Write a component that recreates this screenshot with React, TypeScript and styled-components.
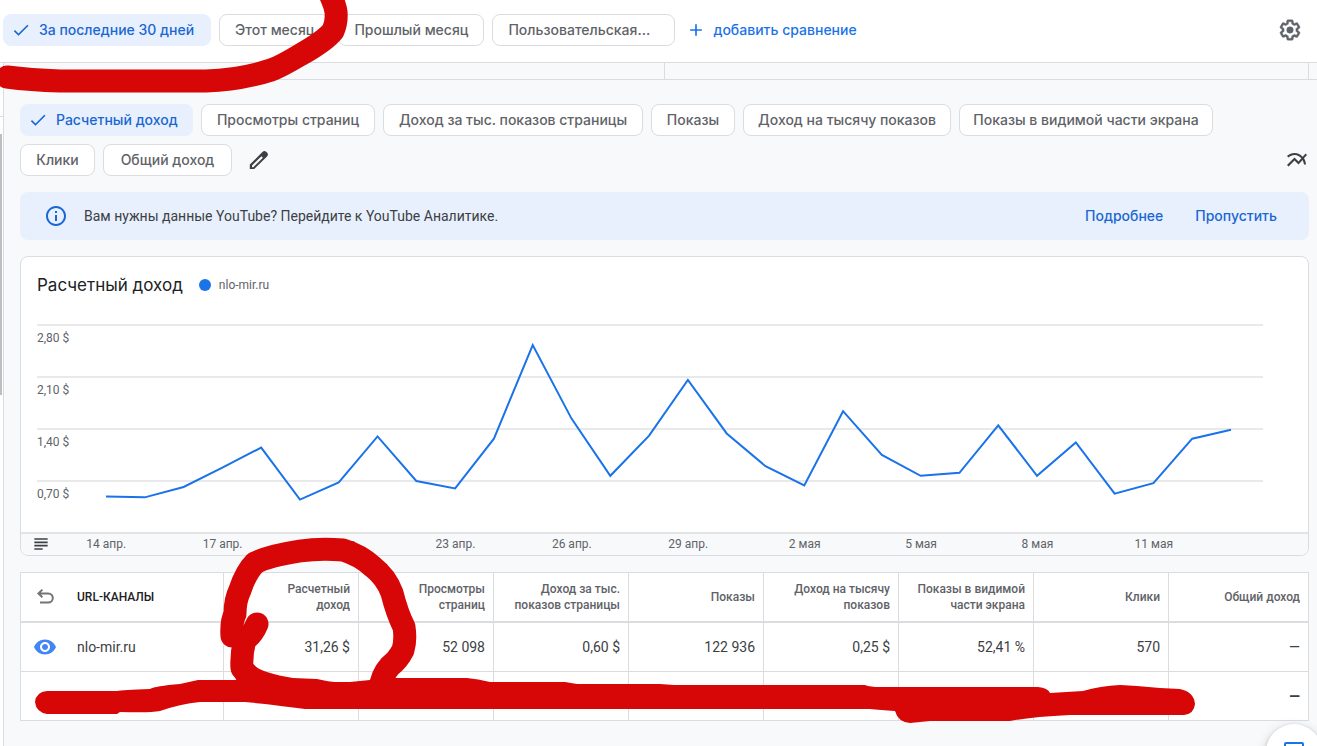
import React from "react";
import styled, { createGlobalStyle, css } from "styled-components";
import { MdAdd, MdCheck, MdMultilineChart, MdOutlineInfo, MdSubject, MdVisibility } from "react-icons/md";

const display = `Inter, "Noto Sans", sans-serif`;
const line = "#dadce0";

const GlobalStyle = createGlobalStyle`
  * { box-sizing: border-box; }
  body { margin: 0; background: #f8f9fa; font-family: Roboto, "Noto Sans", sans-serif; color: #3c4043; overflow: hidden; }
  button { font: inherit; color: inherit; border: 0; padding: 0; background: none; cursor: pointer; }
  svg { display: block; }
`;

const Page = styled.div`
  position: relative;
  min-height: 100vh;
`;

const TopBar = styled.header`
  display: flex;
  align-items: center;
  gap: 8px;
  height: 63px;
  padding: 0 15px 2px 3px;
  background: #fff;
  border-bottom: 1px solid ${line};
`;

const Spacer = styled.div`
  flex: 1;
`;

const Chip = styled.button<{ $selected?: boolean; $width?: number; $start?: boolean }>`
  display: flex;
  align-items: center;
  justify-content: ${(p) => (p.$start ? "flex-start" : "center")};
  height: 32px;
  padding: 0 ${(p) => (p.$width && !p.$start ? 0 : 15)}px;
  width: ${(p) => (p.$width ? `${p.$width}px` : "auto")};
  border: 1px solid ${line};
  border-radius: 8px;
  background: #fff;
  color: #5f6368;
  font: 500 14px/20px ${display};
  white-space: nowrap;
  ${(p) =>
    p.$selected &&
    css`
      justify-content: flex-start;
      gap: 8px;
      padding-left: 7px;
      border-color: #e8f0fe;
      background: #e8f0fe;
      color: #1967d2;
    `}
`;

const AddButton = styled.button`
  display: flex;
  align-items: center;
  gap: 7px;
  margin-left: 3px;
  color: #1a73e8;
  font: 500 14px/20px ${display};
`;

const IconButton = styled.button`
  display: grid;
  place-items: center;
  width: 24px;
  height: 24px;
  color: ${(p) => p.color || "#3c4043"};
`;

const Body = styled.div`
  display: flex;
`;

const Rail = styled.div`
  display: flex;
  flex-direction: column;
  flex: none;
  width: 4px;
  min-height: 683px;
  border-right: 1px solid ${line};
  background: #fff;
`;

const RailTop = styled.div`
  height: 54px;
  border-bottom: 1px solid ${line};
`;

const RailThumb = styled.div`
  width: 2px;
  height: 261px;
  margin-top: 17px;
  background: #bdbdc2;
`;

const Content = styled.div`
  flex: 1;
  min-width: 0;
`;

const SplitStrip = styled.div`
  display: flex;
  height: 17px;
  padding-right: 8px;
  border-bottom: 1px solid ${line};
`;

const SplitCell = styled.div<{ $grow: number }>`
  flex: ${(p) => p.$grow} 1 0;
  border-right: 1px solid ${line};
`;

const Main = styled.main`
  display: flex;
  flex-direction: column;
  gap: 16px;
  padding: 24px 8px 0 16px;
`;

const MetricRow = styled.div`
  display: flex;
  align-items: flex-end;
`;

const Chips = styled.div`
  display: flex;
  flex: 1;
  flex-wrap: wrap;
  align-items: center;
  gap: 8px;
  margin-right: 40px;
`;

const EditButton = styled(IconButton)`
  margin-left: 7px;
`;

const ChartButton = styled(IconButton)`
  margin-bottom: 4px;
`;

const Banner = styled.section`
  display: flex;
  align-items: center;
  height: 48px;
  padding: 0 32px 0 24px;
  border-radius: 8px;
  background: #e8f0fe;
  font-size: 14px;
  line-height: 20px;
`;

const BannerText = styled.p`
  flex: 1;
  margin: 0 0 0 16px;
`;

const BannerLink = styled.a`
  margin-left: 32px;
  color: #1967d2;
  font: 500 14px/20px ${display};
  text-decoration: none;
`;

const Card = styled.section`
  border: 1px solid ${line};
  border-radius: 8px;
  background: #fff;
  overflow: hidden;
`;

const CardHead = styled.div`
  display: flex;
  align-items: center;
  height: 56px;
  padding: 0 16px;
`;

const Title = styled.h2`
  margin: 0 16px 0 0;
  color: #202124;
  font: 400 17px/24px ${display};
`;

const Legend = styled.span`
  display: flex;
  align-items: center;
  gap: 8px;
  color: #5f6368;
  font-size: 12px;
  line-height: 16px;
`;

const Dot = styled.span`
  width: 12px;
  height: 12px;
  border-radius: 50%;
  background: #1a73e8;
`;

const Plot = styled.div`
  position: relative;
  height: 219px;
  padding: 11px 45px 0 16px;
`;

const GridRow = styled.div`
  height: 52px;
  padding-top: 4px;
  border-top: 2px solid #e9e9e9;
  color: #5f6368;
  font-size: 12px;
  line-height: 16px;
`;

const LineArea = styled.div`
  position: absolute;
  top: 12px;
  bottom: -1px;
  left: 85px;
  right: 77px;
  svg { width: 100%; height: 100%; overflow: visible; }
`;

const AxisBar = styled.div`
  display: flex;
  align-items: center;
  height: 23px;
  padding: 0 96px 2px 10px;
  border-top: 2px solid #e3e4e6;
  background: #f8f9fa;
  color: #5f6368;
  font-size: 12px;
  line-height: 16px;
`;

const AxisIcon = styled.button`
  flex: none;
  width: 17px;
  color: #3c4043;
`;

const AxisLabel = styled.span`
  flex: 1 1 0;
  text-align: center;
`;

const Table = styled.table`
  width: 100%;
  table-layout: fixed;
  border-spacing: 0;
  border: solid ${line};
  border-width: 1px 0 0 1px;
  background: #fff;
`;

const NameCol = styled.col`
  width: 203px;
`;

const MetricCol = styled.col`
  width: 135px;
`;

const HeadCell = styled.th`
  height: 50px;
  padding: 0 8px;
  border: solid ${line};
  border-width: 0 1px 2px 0;
  color: #5f6368;
  font-size: 12px;
  font-weight: 500;
  line-height: 16px;
  text-align: right;
  white-space: pre-line;
`;

const Cell = styled.td<{ $total?: boolean }>`
  height: 49px;
  padding: 0 8px;
  border: solid ${line};
  border-width: 0 1px 1px 0;
  font-size: 14px;
  font-weight: ${(p) => (p.$total ? 700 : 400)};
  line-height: 20px;
  text-align: right;
`;

const NameBox = styled.div`
  display: flex;
  align-items: center;
  gap: 20px;
  padding-left: 4px;
`;

const HeadName = styled.span`
  color: #202124;
  font-size: 12px;
`;

const ChatButton = styled.button`
  position: absolute;
  right: -5px;
  bottom: -34px;
  display: grid;
  place-items: center;
  width: 56px;
  height: 56px;
  border-radius: 50%;
  background: #fff;
  box-shadow: 0 1px 3px rgba(60, 64, 67, 0.3), 0 4px 8px 3px rgba(60, 64, 67, 0.15);
  color: #1a73e8;
`;

const Marker = styled.svg`
  position: absolute;
  inset: 0;
  width: 100%;
  height: 100%;
  pointer-events: none;
`;

const metrics = [
  { label: "Расчетный доход", heading: "Расчетный\nдоход", width: 173 },
  { label: "Просмотры страниц", heading: "Просмотры\nстраниц", width: 174 },
  { label: "Доход за тыс. показов страницы", heading: "Доход за тыс.\nпоказов страницы", width: 260 },
  { label: "Показы", heading: "Показы", width: 84 },
  { label: "Доход на тысячу показов", heading: "Доход на тысячу\nпоказов", width: 208 },
  { label: "Показы в видимой части экрана", heading: "Показы в видимой\nчасти экрана", width: 254 },
  { label: "Клики", heading: "Клики", width: 75 },
  { label: "Общий доход", heading: "Общий доход", width: 129 },
];

const rowValues = ["31,26 $", "52 098", "0,60 $", "122 936", "0,25 $", "52,41 %", "570", "—"];
const totalValues = ["", "", "", "", "", "", "", "—"];

const axisValues = ["2,80 $", "2,10 $", "1,40 $", "0,70 $"];
const dates = ["14 апр.", "17 апр.", "20 апр.", "23 апр.", "26 апр.", "29 апр.", "2 мая", "5 мая", "8 мая", "11 мая"];

const income = [
  0.49, 0.48, 0.62, 0.88, 1.15, 0.45, 0.68, 1.3, 0.7, 0.6, 1.27, 2.53, 1.54, 0.77, 1.31, 2.06, 1.34, 0.9, 0.64, 1.64,
  1.05, 0.77, 0.81, 1.45, 0.77, 1.22, 0.53, 0.67, 1.27, 1.39,
];
const points = income.map((v, i) => `${i * 10},${280 - v * 100}`).join(" ");

const GearIcon = () => (
  <svg width="24" height="24" viewBox="0 0 24 24" fill="currentColor" stroke="currentColor" strokeWidth="0.4" aria-hidden="true">
    <path d="M13.85 22.25h-3.7c-.74 0-1.36-.54-1.45-1.27l-.27-1.89c-.27-.14-.53-.29-.79-.46l-1.8.72c-.7.26-1.47-.03-1.81-.65L2.2 15.53c-.35-.66-.2-1.44.36-1.88l1.53-1.19c-.01-.15-.02-.3-.02-.46 0-.15.01-.31.02-.46l-1.52-1.19c-.59-.45-.74-1.26-.37-1.88l1.85-3.19c.34-.62 1.11-.9 1.79-.63l1.81.73c.26-.17.52-.32.78-.46l.27-1.91c.09-.7.71-1.25 1.44-1.25h3.7c.74 0 1.36.54 1.45 1.27l.27 1.89c.27.14.53.29.79.46l1.8-.72c.71-.26 1.48.03 1.82.65l1.84 3.18c.36.66.2 1.44-.36 1.88l-1.52 1.19c.01.15.02.3.02.46s-.01.31-.02.46l1.52 1.19c.56.45.72 1.23.37 1.86l-1.86 3.22c-.34.62-1.11.9-1.8.63l-1.8-.72c-.26.17-.52.32-.78.46l-.27 1.91c-.1.68-.72 1.22-1.46 1.22zm-3.23-2h2.76l.37-2.55.53-.22c.44-.18.88-.44 1.34-.78l.45-.34 2.38.96 1.38-2.4-2.03-1.58.07-.56c.03-.26.06-.51.06-.78s-.03-.53-.06-.78l-.07-.56 2.03-1.58-1.39-2.4-2.39.96-.45-.35c-.42-.32-.87-.58-1.33-.77l-.52-.22-.37-2.55h-2.76l-.37 2.55-.53.21c-.44.19-.88.44-1.34.79l-.45.33-2.38-.95-1.39 2.39 2.03 1.58-.07.56a7 7 0 0 0-.06.79c0 .26.02.53.06.78l.07.56-2.03 1.58 1.38 2.4 2.39-.96.45.35c.43.33.86.58 1.33.77l.53.22.38 2.55z" />
    <circle cx="12" cy="12" r="3.3" />
  </svg>
);

const PencilIcon = () => (
  <svg width="24" height="24" viewBox="0 0 24 24" fill="currentColor" fillRule="evenodd" aria-hidden="true">
    <path d="M2.8 21v-4.4L15.4 4q2-1.9 4 0l.6.6q1.9 2 0 4L7.2 21zM5 19.2h1.3L15.9 9.7l-1.5-1.5L5 17.6z" />
  </svg>
);

const UndoIcon = () => (
  <svg width="24" height="24" viewBox="0 0 24 24" fill="none" stroke="#757575" strokeWidth="2" aria-hidden="true">
    <path d="M9.4 4.6 5.4 8.4l4 3.8M5.4 8.4h9.8a4.6 4.6 0 0 1 0 9.2H7" />
  </svg>
);

const ChatIcon = () => (
  <svg width="24" height="24" viewBox="0 0 24 24" fill="none" stroke="currentColor" strokeWidth="2" aria-hidden="true">
    <path d="M3 21V4q0-1 1-1h16q1 0 1 1v12q0 1-1 1H7z" />
  </svg>
);

export default function App() {
  return (
    <Page>
      <GlobalStyle />
      <TopBar>
        <Chip $selected $width={208} $start>
          <MdCheck size={20} />
          За последние 30 дней
        </Chip>
        <Chip>Этот месяц</Chip>
        <Chip>Прошлый месяц</Chip>
        <Chip $width={183} $start>
          Пользовательская…
        </Chip>
        <AddButton>
          <MdAdd size={20} />
          добавить сравнение
        </AddButton>
        <Spacer />
        <IconButton color="#5f6368" aria-label="Настройки">
          <GearIcon />
        </IconButton>
      </TopBar>
      <Body>
        <Rail>
          <RailTop />
          <RailThumb />
        </Rail>
        <Content>
          <SplitStrip>
            <SplitCell $grow={661} />
            <SplitCell $grow={644} />
          </SplitStrip>
          <Main>
            <MetricRow>
              <Chips>
                {metrics.map((m, i) => (
                  <Chip key={m.label} $selected={i === 0} $width={m.width}>
                    {i === 0 && <MdCheck size={20} />}
                    {m.label}
                  </Chip>
                ))}
                <EditButton aria-label="Изменить">
                  <PencilIcon />
                </EditButton>
              </Chips>
              <ChartButton aria-label="Тип диаграммы">
                <MdMultilineChart size={24} />
              </ChartButton>
            </MetricRow>
            <Banner>
              <MdOutlineInfo size={24} color="#1967d2" />
              <BannerText>Вам нужны данные YouTube? Перейдите к YouTube Аналитике.</BannerText>
              <BannerLink href="#more">Подробнее</BannerLink>
              <BannerLink href="#skip">Пропустить</BannerLink>
            </Banner>
            <Card>
              <CardHead>
                <Title>Расчетный доход</Title>
                <Legend>
                  <Dot />
                  nlo-mir.ru
                </Legend>
              </CardHead>
              <Plot>
                {axisValues.map((v) => (
                  <GridRow key={v}>{v}</GridRow>
                ))}
                <LineArea>
                  <svg viewBox="0 0 290 280" preserveAspectRatio="none" aria-hidden="true">
                    <polyline points={points} fill="none" stroke="#1a73e8" strokeWidth="2" vectorEffect="non-scaling-stroke" />
                  </svg>
                </LineArea>
              </Plot>
              <AxisBar>
                <AxisIcon aria-label="Примечания">
                  <MdSubject size={20} />
                </AxisIcon>
                {dates.map((d) => (
                  <AxisLabel key={d}>{d}</AxisLabel>
                ))}
              </AxisBar>
            </Card>
            <Table>
              <colgroup>
                <NameCol />
                {metrics.slice(1).map((m) => (
                  <MetricCol key={m.label} />
                ))}
                <col />
              </colgroup>
              <thead>
                <tr>
                  <HeadCell scope="col">
                    <NameBox>
                      <UndoIcon />
                      <HeadName>URL-КАНАЛЫ</HeadName>
                    </NameBox>
                  </HeadCell>
                  {metrics.map((m) => (
                    <HeadCell key={m.label} scope="col">
                      {m.heading}
                    </HeadCell>
                  ))}
                </tr>
              </thead>
              <tbody>
                <tr>
                  <Cell>
                    <NameBox>
                      <MdVisibility size={24} color="#4285f4" />
                      nlo-mir.ru
                    </NameBox>
                  </Cell>
                  {rowValues.map((v, i) => (
                    <Cell key={i}>{v}</Cell>
                  ))}
                </tr>
                <tr>
                  <Cell $total />
                  {totalValues.map((v, i) => (
                    <Cell key={i} $total>
                      {v}
                    </Cell>
                  ))}
                </tr>
              </tbody>
            </Table>
          </Main>
        </Content>
      </Body>
      <ChatButton aria-label="Отправить отзыв">
        <ChatIcon />
      </ChatButton>
      <Marker aria-hidden="true">
        <g fill="none" stroke="#d70707" strokeWidth="23" strokeLinecap="round" strokeLinejoin="round">
          <path d="M328 -10Q335 4 336 12Q337 22 333 31Q325 41 300 55Q280 67 271 70Q240 80 206 81L60 81Q30 80 7 77" />
          <path d="M232 636Q231 622 235 614Q235 600 240 590Q246 572 255 563Q268 556 300 551Q320 548 343 550Q360 555 373 567Q386 577 392 593Q397 613 404 627Q406 640 403 650Q398 660 390 666Q381 676 380 690" />
          <path d="M257 624Q253 634 245 640Q241 654 242 668Q250 680 270 690" />
        </g>
        <path
          fill="#d70707"
          d="M47 691H117Q122 690 150 689Q155 686 180 684L198 680H236Q245 664 253 665Q262 673 293 678L317 679Q330 682 335 682H350Q360 681 370 680L393 678H467Q478 679 490 682H565L577 684H660L674 685H865Q870 687 880 687H1038Q1048 688 1050 693L1083 691Q1100 686 1120 685L1137 686L1160 688L1180 689Q1194 692 1195 704Q1194 714 1184 715H1070Q1030 717 1010 721H930L910 723Q898 722 895 711Q880 710 870 709H305Q280 706 265 704L245 702H200Q180 704 160 711Q150 713 120 712L117 714H47Q36 712 35 702Q36 692 47 691Z"
        />
      </Marker>
    </Page>
  );
}
